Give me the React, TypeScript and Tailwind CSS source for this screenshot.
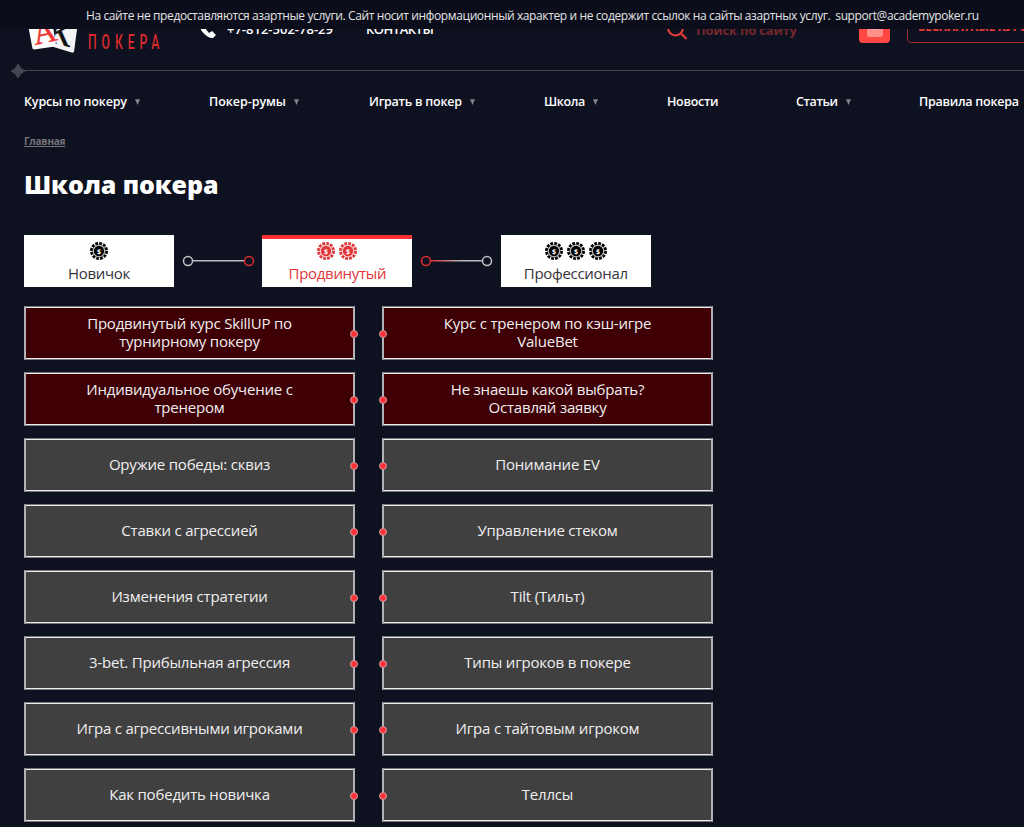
import clsx from "clsx";

const NAV = [
  { label: "Курсы по покеру", arrow: true, pos: "w-[185px]", track: "tracking-[-0.16px]" },
  { label: "Покер-румы", arrow: true, pos: "w-[160px]", track: "tracking-[-0.05px]" },
  { label: "Играть в покер", arrow: true, pos: "w-[175px]", track: "tracking-[-0.25px]" },
  { label: "Школа", arrow: true, pos: "w-[123px]", track: "tracking-[-0.4px]" },
  { label: "Новости", arrow: false, pos: "w-[129px]", track: "tracking-[-0.3px]" },
  { label: "Статьи", arrow: true, pos: "w-[123px]", track: "tracking-[-0.4px]" },
  { label: "Правила покера", arrow: false, pos: "w-[120px]", track: "tracking-[-0.25px]" },
];

const LESSONS = [
  { lines: ["Продвинутый курс SkillUP по", "турнирному покеру"], hot: true },
  { lines: ["Курс с тренером по кэш-игре", "ValueBet"], hot: true },
  { lines: ["Индивидуальное обучение с", "тренером"], hot: true },
  { lines: ["Не знаешь какой выбрать?", "Оставляй заявку"], hot: true },
  { lines: ["Оружие победы: сквиз"] },
  { lines: ["Понимание EV"] },
  { lines: ["Ставки с агрессией"] },
  { lines: ["Управление стеком"] },
  { lines: ["Изменения стратегии"] },
  { lines: ["Tilt (Тильт)"] },
  { lines: ["3-bet. Прибыльная агрессия"] },
  { lines: ["Типы игроков в покере"] },
  { lines: ["Игра с агрессивными игроками"] },
  { lines: ["Игра с тайтовым игроком"] },
  { lines: ["Как победить новичка"] },
  { lines: ["Теллсы"] },
];

export default function App() {
  return (
    <div className="relative h-[827px] w-[1024px] overflow-hidden bg-[#0e111f] font-['Open_Sans','Noto_Sans',sans-serif] text-white">
      <Notice />
      <Header />
      <Divider />
      <nav className="flex h-[48px] items-center pl-6 text-[12.5px] font-semibold whitespace-nowrap">
        {NAV.map((n) => (
          <a key={n.label} className={clsx("flex shrink-0 items-center", n.pos)}>
            <span className={n.track}>{n.label}</span>
            {n.arrow && (
              <svg width="5" height="6" viewBox="0 0 5 6" className="ml-2">
                <path d="M0 0.3h5L2.5 6z" fill="#85868d" />
              </svg>
            )}
          </a>
        ))}
      </nav>
      <main className="pt-[5px] pl-6">
        <a className="block h-[16px] pt-[3px] text-[10px] leading-[14px] font-bold tracking-[-0.25px] text-[#73747b] underline">Главная</a>
        <h1 className="mt-[20px] h-[34px] text-[25px] leading-[34px] font-extrabold tracking-[-0.1px]">Школа покера</h1>
        <div className="mt-[34px] flex h-[52px] items-center">
          <Level label="Новичок" chips={1} />
          <Connector from="#c4c4c4" to="#df2c30" line="plain" />
          <Level label="Продвинутый" chips={2} active />
          <Connector from="#df2c30" to="#c4c4c4" line="fade" />
          <Level label="Профессионал" chips={3} />
        </div>
        <div className="mt-[19px] grid w-[689px] grid-cols-[331px_331px] gap-x-[27px] gap-y-3">
          {LESSONS.map((l, i) => (
            <Lesson key={l.lines[0]} lines={l.lines} hot={l.hot} left={i % 2 === 0} />
          ))}
        </div>
      </main>
    </div>
  );
}

function Notice() {
  return (
    <div className="absolute inset-x-0 top-0 z-10 flex h-[29px] items-center bg-[#0b0e1a] pt-[2px] pl-[86px] text-[12px] whitespace-nowrap text-[#e4e4e6]">
      <span className="tracking-[-0.385px]">
        На сайте не предоставляются азартные услуги. Сайт носит информационный характер и не содержит ссылок на сайты азартных услуг.
      </span>
      <span className="ml-[5px] tracking-[-0.42px]">support@academypoker.ru</span>
    </div>
  );
}

function Header() {
  return (
    <header className="flex h-[66px] w-[1120px] items-start pl-[26px] whitespace-nowrap">
      <svg width="54" height="54" viewBox="0 0 54 54" className="shrink-0">
        <path d="M24 8l29 6-5 38-1.500 0.700-19-5.700z" fill="#f4f4f4" />
        <text x="20" y="41" fontFamily="Liberation Serif" fontSize="34" fill="#111" stroke="#111" strokeWidth="0.700" transform="rotate(14 20 41)">K</text>
        <path d="M0 14l24-6 6 37-1 1.500-21 3-1.500-1z" fill="#fff" />
        <text x="9" y="45" fontFamily="Liberation Serif" fontSize="33" fill="#ee3431" stroke="#ee3431" strokeWidth="0.400" transform="rotate(-12 9 45)">A</text>
      </svg>
      <div className="mt-[3px] ml-[8px] w-[112px] shrink-0 text-[21px] leading-[26px]">
        <div className="origin-left scale-x-[0.58] font-['Roboto',sans-serif] tracking-[5px]">АКАДЕМИЯ</div>
        <div className="origin-left scale-x-[0.58] font-['Roboto',sans-serif] font-medium tracking-[8.500px] text-[#da2a2e]">ПОКЕРА</div>
      </div>
      <svg width="17" height="17" viewBox="0 0 17 17" className="mt-[22px] -ml-[1px] shrink-0">
        <path d="M4 0L1 2C-1 7 8 17 14 16l3-3-4-4-3 2-4-5 1-3z" fill="#fff" />
      </svg>
      <div className="mt-[20px] ml-[11px] w-[139px] text-[13px] leading-[18px] font-semibold">+7-812-502-78-29</div>
      <div className="mt-[20px] w-[301px] text-[13px] leading-[18px] font-semibold tracking-[-0.5px]">КОНТАКТЫ</div>
      <svg width="20" height="20" viewBox="0 0 20 20" fill="none" stroke="#ee3b38" strokeWidth="2" className="mt-[20px]">
        <circle cx="8.500" cy="8" r="7.500" />
        <path d="M14 13.500l5.500 5.500" />
      </svg>
      <div className="mt-[20px] ml-[9px] w-[163px] text-[13px] leading-[20px] font-bold tracking-[-0.2px] text-[#75272d]">Поиск по сайту</div>
      <div className="mt-[12px] flex h-[31px] w-[31px] shrink-0 items-end justify-center rounded-[4px] bg-[#ff4841] pb-[6px]">
        <svg width="16" height="16" viewBox="0 0 16 16">
          <rect width="16" height="16" rx="3" fill="#ff8f8a" />
          <path d="M6 9l2-2 2 2" fill="none" stroke="#ffd5d3" />
        </svg>
      </div>
      <div className="mt-[8px] ml-[17px] h-[35px] w-[170px] shrink-0 rounded-[4px] border border-[#a42b30] pt-[9px] pl-[10px] text-[12px] leading-[18px] font-bold tracking-[-0.5px] text-[#ee3b38]">
        БЕСПЛАТНЫЕ КУРСЫ
      </div>
    </header>
  );
}

function Divider() {
  return (
    <div className="-mt-[3px] flex h-[15px] items-center pl-[11px]">
      <svg width="14" height="14" viewBox="0 0 14 14" className="shrink-0">
        <path d="M7 0Q9 5 14 7 9 9 7 14 5 9 0 7 5 5 7 0z" fill="#444650" stroke="#444650" />
      </svg>
      <div className="h-px flex-1 bg-[#454751]" />
    </div>
  );
}

function Chip() {
  return (
    <svg width="18" height="18" viewBox="0 0 18 18">
      <circle cx="9" cy="9" r="7.700" fill="none" stroke="currentColor" strokeWidth="2.600" strokeDasharray="2.800 1.231" />
      <circle cx="9" cy="9" r="6.300" fill="none" stroke="currentColor" strokeWidth="0.600" />
      <circle cx="9" cy="9" r="5.200" fill="currentColor" />
      <text x="9" y="11.600" textAnchor="middle" fontSize="7" fontWeight="700" fill="#fff">$</text>
    </svg>
  );
}

function Level({ label, chips, active }: { label: string; chips: number; active?: boolean }) {
  return (
    <div
      className={clsx(
        "relative flex h-[52px] w-[150px] shrink-0 flex-col items-center bg-white pt-[7px]",
        active ? "text-[#e03539]" : "text-black",
      )}
    >
      {active && <span className="absolute inset-x-0 top-0 h-1 bg-[#ff3033]" />}
      <div className="flex gap-1">
        {Array.from({ length: chips }, (_, i) => (
          <Chip key={i} />
        ))}
      </div>
      <span className={clsx("mt-[3px] text-[15px] leading-[20px] tracking-[-0.3px]", !active && "text-[#33343a]")}>{label}</span>
    </div>
  );
}

function Connector({ from, to, line }: { from: string; to: string; line: "plain" | "fade" }) {
  return (
    <svg width="88.400" height="12" viewBox="0 0 88.400 12" fill="none" strokeWidth="1.500" className="shrink-0">
      <defs>
        <linearGradient id="fade">
          <stop offset="0" stopColor="#df2c30" />
          <stop offset="0.600" stopColor="#b9b9bb" />
        </linearGradient>
      </defs>
      <rect x="18" y="5" width="53" height="1.500" fill={line === "fade" ? "url(#fade)" : "#b9b9bb"} />
      <circle cx="14" cy="6" r="4.500" stroke={from} />
      <circle cx="75" cy="6" r="4.500" stroke={to} />
    </svg>
  );
}

function Lesson({ lines, hot, left }: { lines: string[]; hot?: boolean; left: boolean }) {
  return (
    <a
      className={clsx(
        "relative flex h-[54px] flex-col items-center justify-center border-x-2 border-y border-x-[#b2b2b6] border-y-[#72747b] pb-[2px] text-[15px] leading-[18.500px] whitespace-nowrap text-[#f0eff0] shadow-[inset_0_1px_#eee,inset_0_-1px_#eee]",
        hot ? "bg-[#3f0005]" : "bg-[#404040]",
      )}
    >
      {lines.map((t) => (
        <span key={t} className="tracking-[-0.2px]">{t}</span>
      ))}
      <span
        className={clsx(
          "absolute top-[23px] h-2 w-2 rounded-full border border-[#c9a0a4] bg-[#ff3237]",
          left ? "-right-[5px]" : "-left-[5px]",
        )}
      />
    </a>
  );
}
